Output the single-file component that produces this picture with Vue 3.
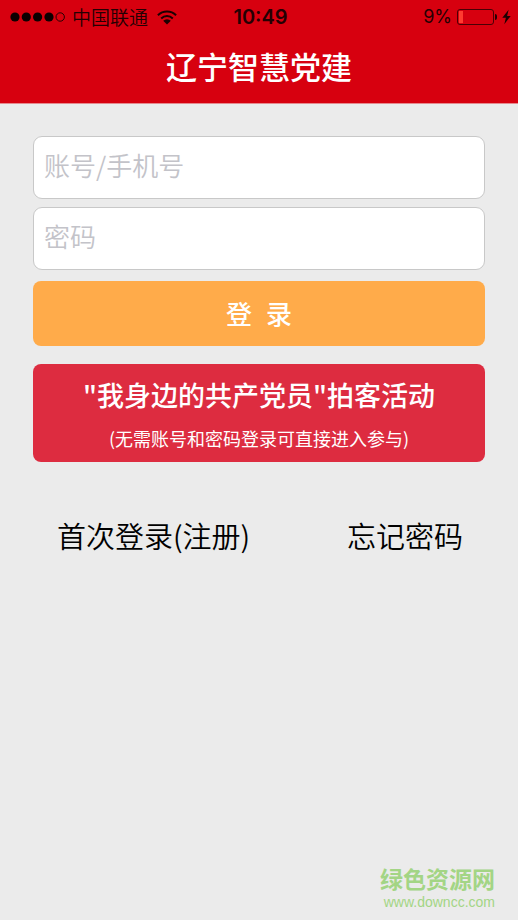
<script setup>
import { ref } from 'vue'

const account = ref('')
const password = ref('')
const battery = 9
const signal = [5, 16.3, 27.6, 39]
</script>

<template>
  <div class="screen">
    <header class="top">
      <div class="status">
        <div class="carrier">
          <svg class="signal" viewBox="0 0 55 10" aria-hidden="true">
            <circle v-for="x in signal" :key="x" :cx="x" cy="5" r="4.6" />
            <circle class="off" cx="50.2" cy="5" r="4.2" />
          </svg>
          <span class="network">中国联通</span>
          <svg class="wifi" viewBox="0 0 20 15" aria-hidden="true">
            <path d="M0.9 5.3a12.9 12.9 0 0 1 18.2 0" />
            <path d="M4.2 8.5a8.2 8.2 0 0 1 11.6 0" />
            <path class="solid" d="M6.2 10.8a5.4 5.4 0 0 1 7.6 0L10 14.6z" />
          </svg>
        </div>
        <time class="clock">10:49</time>
        <div class="power">
          <span>{{ battery }}%</span>
          <span class="battery"><i class="level" :style="{ width: battery + '%' }"></i></span>
          <svg class="bolt" viewBox="0 0 9 16" aria-hidden="true">
            <path d="M6.6 0.8 0.3 8.8h3.6L2.3 15.2 8.7 6.9H5.1z" />
          </svg>
        </div>
      </div>
      <h1 class="title">辽宁智慧党建</h1>
    </header>

    <main class="content">
      <form class="form" @submit.prevent>
        <input v-model="account" class="field" type="text" placeholder="账号/手机号" aria-label="账号/手机号" />
        <input v-model="password" class="field" type="password" placeholder="密码" aria-label="密码" />
        <button class="login" type="submit"><span>登</span><span>录</span></button>
      </form>
      <button class="activity" type="button">
        <span class="activity-name">"我身边的共产党员"拍客活动</span>
        <span class="activity-note">(无需账号和密码登录可直接进入参与)</span>
      </button>
      <nav class="links">
        <a href="#register">首次登录(注册)</a>
        <a href="#forgot">忘记密码</a>
      </nav>
    </main>

    <footer class="mark">
      <strong class="mark-name">绿色资源网</strong>
      <span class="mark-site">www.downcc.com</span>
    </footer>
  </div>
</template>

<style>
body {
  margin: 0;
  background: #ebebeb;
}
</style>

<style scoped>
.screen {
  display: flex;
  flex-direction: column;
  min-height: 100vh;
  box-sizing: border-box;
  background: #ebebeb;
  color: #000;
  font-family: Inter, "Noto Sans CJK SC", sans-serif;
}

.top {
  background: #d7000f;
  padding-bottom: 11px;
  border-bottom: 1px solid #e58a8f;
}

.status {
  display: grid;
  grid-template-columns: 1fr auto 1fr;
  align-items: center;
  height: 34px;
  padding: 0 7px 0 10px;
  color: #240003;
  font-size: 19px;
  line-height: 34px;
}

.carrier,
.power {
  display: flex;
  align-items: center;
}

.signal {
  width: 55px;
  height: 10px;
  fill: #0c0001;
}

.signal .off {
  fill: none;
  stroke: #240003;
}

.network {
  margin-left: 7px;
  font-family: "Noto Sans CJK SC", sans-serif;
  font-weight: 350;
  line-height: 32px;
}

.wifi {
  width: 20px;
  height: 15px;
  margin-left: 9px;
  fill: none;
  stroke: #1c0002;
  stroke-width: 2;
}

.wifi .solid {
  fill: #1c0002;
  stroke: none;
}

.clock {
  font-size: 20px;
  font-weight: 600;
}

.power {
  justify-content: flex-end;
  font-size: 18px;
}

.battery {
  position: relative;
  box-sizing: border-box;
  width: 37px;
  height: 16px;
  margin: 0 8px 0 5px;
  padding: 1px;
  border: 1px solid #4a0005;
  border-radius: 3px;
}

.battery::after {
  content: "";
  position: absolute;
  top: 4px;
  right: -4px;
  width: 2px;
  height: 6px;
  border-radius: 0 2px 2px 0;
  background: #240003;
}

.level {
  display: block;
  min-width: 4px;
  height: 12px;
  background: #ff3b30;
}

.bolt {
  width: 9px;
  height: 16px;
  fill: #1c0002;
}

.title {
  margin: 0;
  padding-top: 10px;
  color: #fff;
  font-size: 31px;
  font-weight: 500;
  line-height: 48px;
  text-align: center;
}

.content {
  padding: 32px 33px 0;
}

.form {
  display: flex;
  flex-direction: column;
  gap: 8px;
}

.field {
  box-sizing: border-box;
  width: 100%;
  height: 63px;
  padding: 0 10px 7px;
  border: 1px solid #c8c8c8;
  border-radius: 9px;
  background: #fff;
  color: #000;
  font: 350 26px/36px "Noto Sans CJK SC", sans-serif;
}

.field::placeholder {
  color: #c3c3c9;
  opacity: 1;
}

.login,
.activity {
  display: flex;
  justify-content: center;
  align-items: center;
  width: 100%;
  border: 0;
  border-radius: 8px;
  color: #fff;
  font-family: "Noto Sans CJK SC", sans-serif;
}

.login {
  gap: 14px;
  height: 65px;
  margin-top: 3px;
  padding-bottom: 3px;
  background: #ffab4a;
  font-size: 26px;
  font-weight: 500;
}

.activity {
  flex-direction: column;
  gap: 10px;
  margin-top: 18px;
  padding: 11px 8px;
  background: #dd2c40;
}

.activity-name {
  font-size: 27px;
  font-weight: 500;
  line-height: 40px;
}

.activity-note {
  font-size: 18px;
  font-weight: 400;
  line-height: 26px;
}

.links {
  display: flex;
  justify-content: space-between;
  padding: 51px 22px 0 24px;
}

.links a {
  color: #000;
  font-size: 29px;
  font-family: "Noto Sans CJK SC", sans-serif;
  font-weight: 350;
  line-height: 44px;
  text-decoration: none;
}

.mark {
  display: flex;
  flex-direction: column;
  align-items: flex-end;
  margin-top: auto;
  padding: 0 23px 10px 0;
  color: #a3d585;
}

.mark-name {
  font-size: 23px;
  font-weight: 700;
  line-height: 28px;
}

.mark-site {
  font-family: "Liberation Sans", sans-serif;
  font-size: 14px;
  line-height: 16px;
}
</style>
